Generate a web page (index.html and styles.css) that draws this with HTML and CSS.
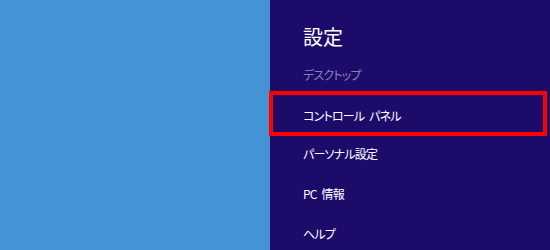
FILE: index.html
```html
<!DOCTYPE html>
<html lang="ja">

<head>
    <meta charset="UTF-8">
    <title>設定</title>
    <link rel="stylesheet" href="styles.css">
</head>

<body>
    <div class="desktop"></div>
    <!-- 設定チャーム -->
    <aside class="charm">
        <h1 class="title">設定</h1>
        <div class="item sub">デスクトップ</div>
        <div class="item mark">コントロール パネル</div>
        <div class="item">パーソナル設定</div>
        <div class="item">PC 情報</div>
        <div class="item">ヘルプ</div>
    </aside>
</body>

</html>
```

FILE: styles.css
```css
* {
    margin: 0;
    padding: 0;
    box-sizing: border-box;
}

body {
    width: 550px;
    height: 250px;
    display: flex;
    overflow: hidden;
    font-family: 'Noto Sans CJK JP', 'Noto Sans', sans-serif;
}

.desktop {
    width: 270px;
    background-color: #4493d5;
}

.charm {
    flex: 1;
    display: flex;
    flex-direction: column;
    background-color: #1d0b6a;
    color: #ffffff;
}

.title {
    font-size: 20px;
    font-weight: normal;
    line-height: 24px;
    margin: 25px 0 0 33px;
}

.item {
    flex-shrink: 0;
    height: 40px;
    line-height: 40px;
    font-size: 12px;
    font-feature-settings: "palt";
    letter-spacing: -0.8px;
    word-spacing: 3px;
    padding-left: 33px;
}

.sub {
    height: 31px;
    line-height: 29px;
    margin-top: 11px;
    color: #8b84b8;
}

.mark {
    height: 45px;
    line-height: 33px;
    margin: 0 3px 0 -1px;
    padding: 4px 0 0 30px;
    border: 4px solid #ff0000;
}

.mark + .item {
    margin-top: -2px;
}
```
